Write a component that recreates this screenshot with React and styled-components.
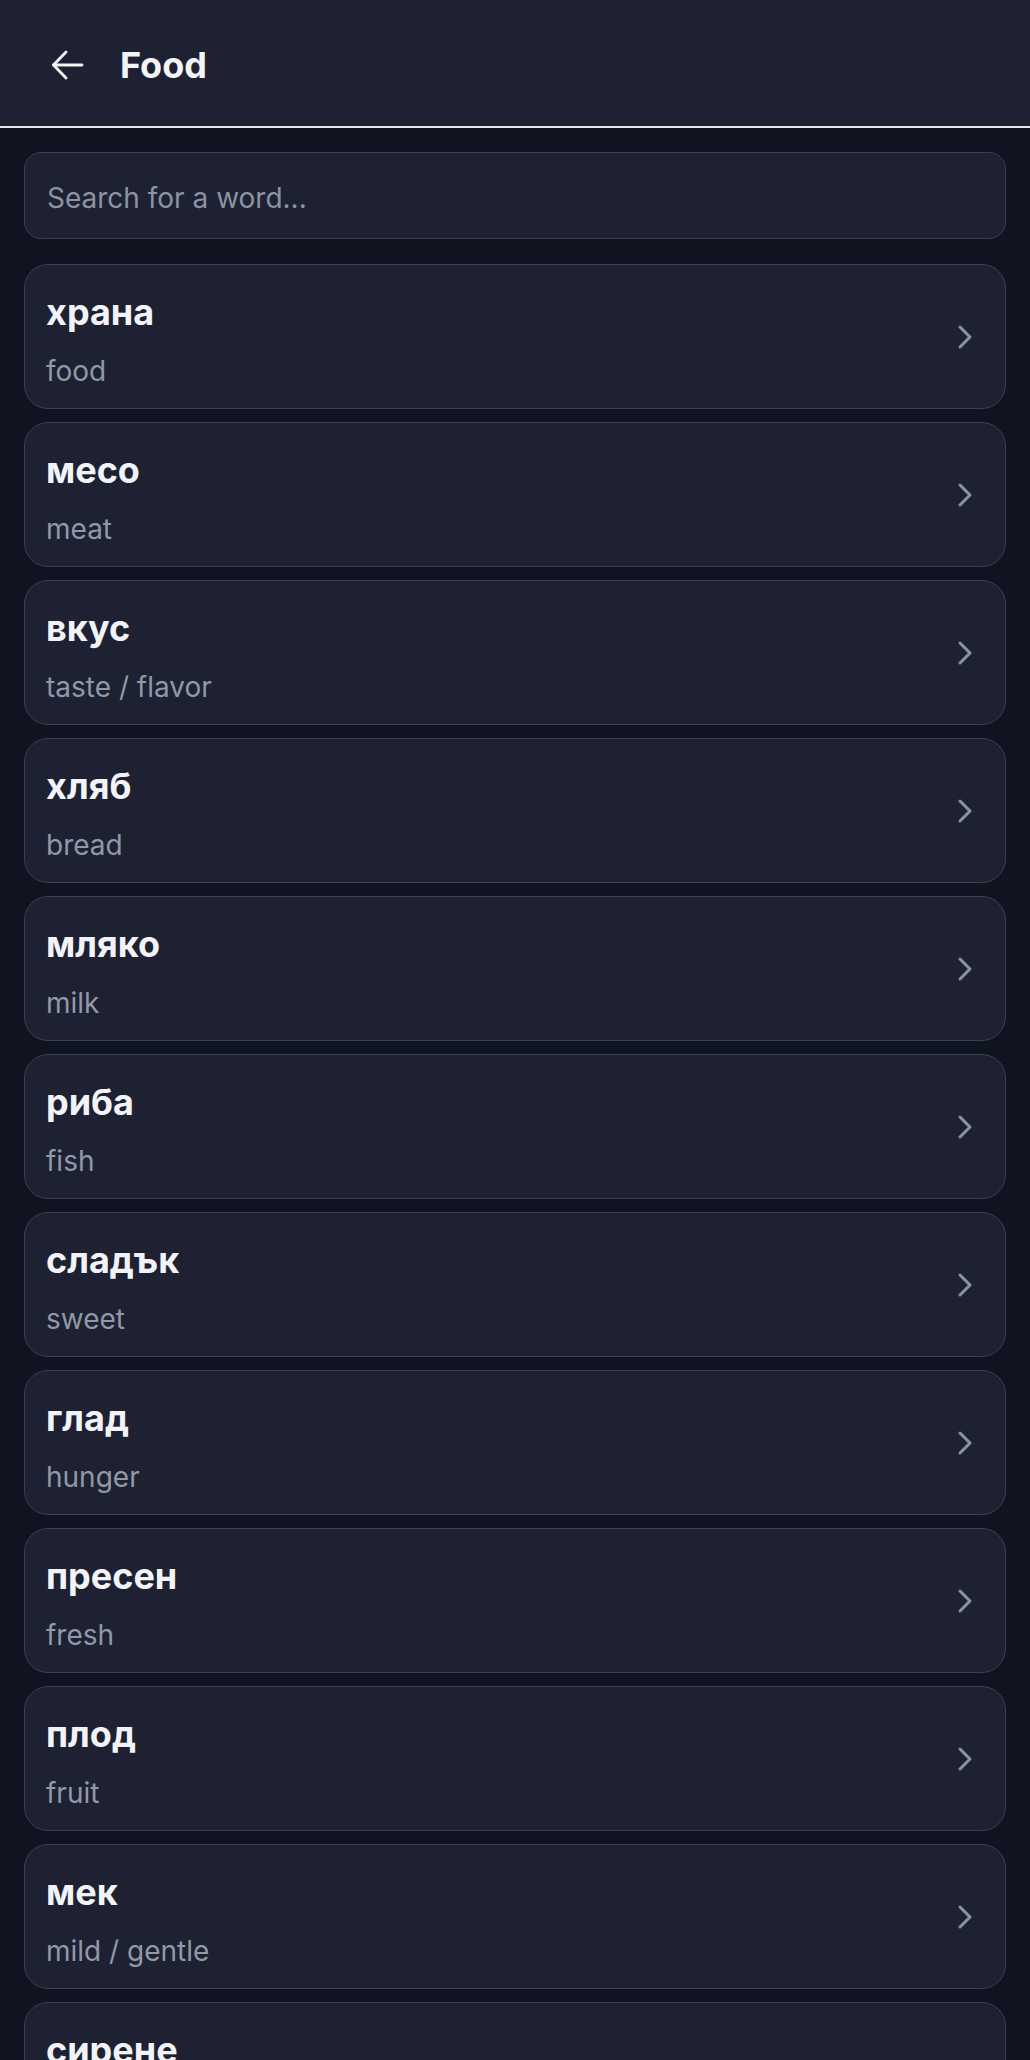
import React, { useState } from "react";
import styled, { createGlobalStyle } from "styled-components";

const GlobalStyle = createGlobalStyle`
    * {
        box-sizing: border-box;
    }
    body {
        margin: 0;
        background: #0f1420;
        font-family: Inter, "Noto Sans", sans-serif;
        color: #f3f4f6;
    }
`;

const words = [
    { bg: "храна", en: "food" },
    { bg: "месо", en: "meat" },
    { bg: "вкус", en: "taste / flavor" },
    { bg: "хляб", en: "bread" },
    { bg: "мляко", en: "milk" },
    { bg: "риба", en: "fish" },
    { bg: "сладък", en: "sweet" },
    { bg: "глад", en: "hunger" },
    { bg: "пресен", en: "fresh" },
    { bg: "плод", en: "fruit" },
    { bg: "мек", en: "mild / gentle" },
    { bg: "сирене", en: "cheese" },
    { bg: "вода", en: "water" },
];

// header
const Header = styled.header`
    display: flex;
    align-items: center;
    height: 128px;
    padding: 3px 0 0 50px;
    background: #1d2131;
    border-bottom: 2px solid #e5e7eb;
`;

const BackButton = styled.button`
    display: flex;
    align-items: center;
    justify-content: center;
    padding: 0;
    margin-right: 36px;
    background: none;
    border: none;
    color: #f3f4f6;
    cursor: pointer;
`;

const Title = styled.h1`
    margin: 0;
    font-size: 36px;
    line-height: 48px;
    font-weight: 700;
    color: #f3f4f6;
`;

// content
const Main = styled.main`
    display: flex;
    flex-direction: column;
    gap: 13px;
    padding: 24px;
`;

const Search = styled.input`
    width: 100%;
    height: 87px;
    margin-bottom: 12px;
    padding: 5px 22px 0;
    background: #1d2131;
    border: 1px solid #3a4152;
    border-radius: 17px;
    font-family: Inter, "Noto Sans", sans-serif;
    font-size: 28px;
    color: #f3f4f6;
    outline: none;

    &::placeholder {
        color: #8b93a5;
    }
`;

const Card = styled.div`
    display: flex;
    align-items: center;
    justify-content: space-between;
    padding: 0 19px 0 21px;
    background: #1d2131;
    border: 1px solid #3a4152;
    border-radius: 24px;
    cursor: pointer;
`;

const Texts = styled.div`
    display: flex;
    flex-direction: column;
    gap: 15px;
    padding: 23px 0 17px;
`;

const Word = styled.div`
    font-size: 36px;
    line-height: 48px;
    font-weight: 700;
    color: #f1f3f8;
`;

const Meaning = styled.div`
    font-size: 28px;
    line-height: 40px;
    color: #9098a9;
`;

const ArrowLeft = () => (
    <svg width="34" height="32" viewBox="0 0 34 32" fill="none" stroke="currentColor" strokeWidth="2.8" strokeLinecap="round" strokeLinejoin="round">
        <path d="M3.5 16H32" />
        <path d="M16 3 3.5 16 16 29" />
    </svg>
);

const Chevron = () => (
    <svg width="42" height="42" viewBox="0 0 42 42" fill="none" stroke="#8a92a4" strokeWidth="3" strokeLinecap="round" strokeLinejoin="round">
        <path d="m16 11 10 10-10 10" />
    </svg>
);

const App = () => {
    const [query, setQuery] = useState("");
    const shown = words.filter(
        (w) => w.bg.includes(query) || w.en.includes(query.toLowerCase())
    );

    return (
        <>
            <GlobalStyle />
            <Header>
                <BackButton aria-label="Back">
                    <ArrowLeft />
                </BackButton>
                <Title>Food</Title>
            </Header>
            <Main>
                <Search
                    placeholder="Search for a word..."
                    value={query}
                    onChange={(e) => setQuery(e.target.value)}
                />
                {shown.map((w) => (
                    <Card key={w.bg}>
                        <Texts>
                            <Word>{w.bg}</Word>
                            <Meaning>{w.en}</Meaning>
                        </Texts>
                        <Chevron />
                    </Card>
                ))}
            </Main>
        </>
    );
};

export default App;
